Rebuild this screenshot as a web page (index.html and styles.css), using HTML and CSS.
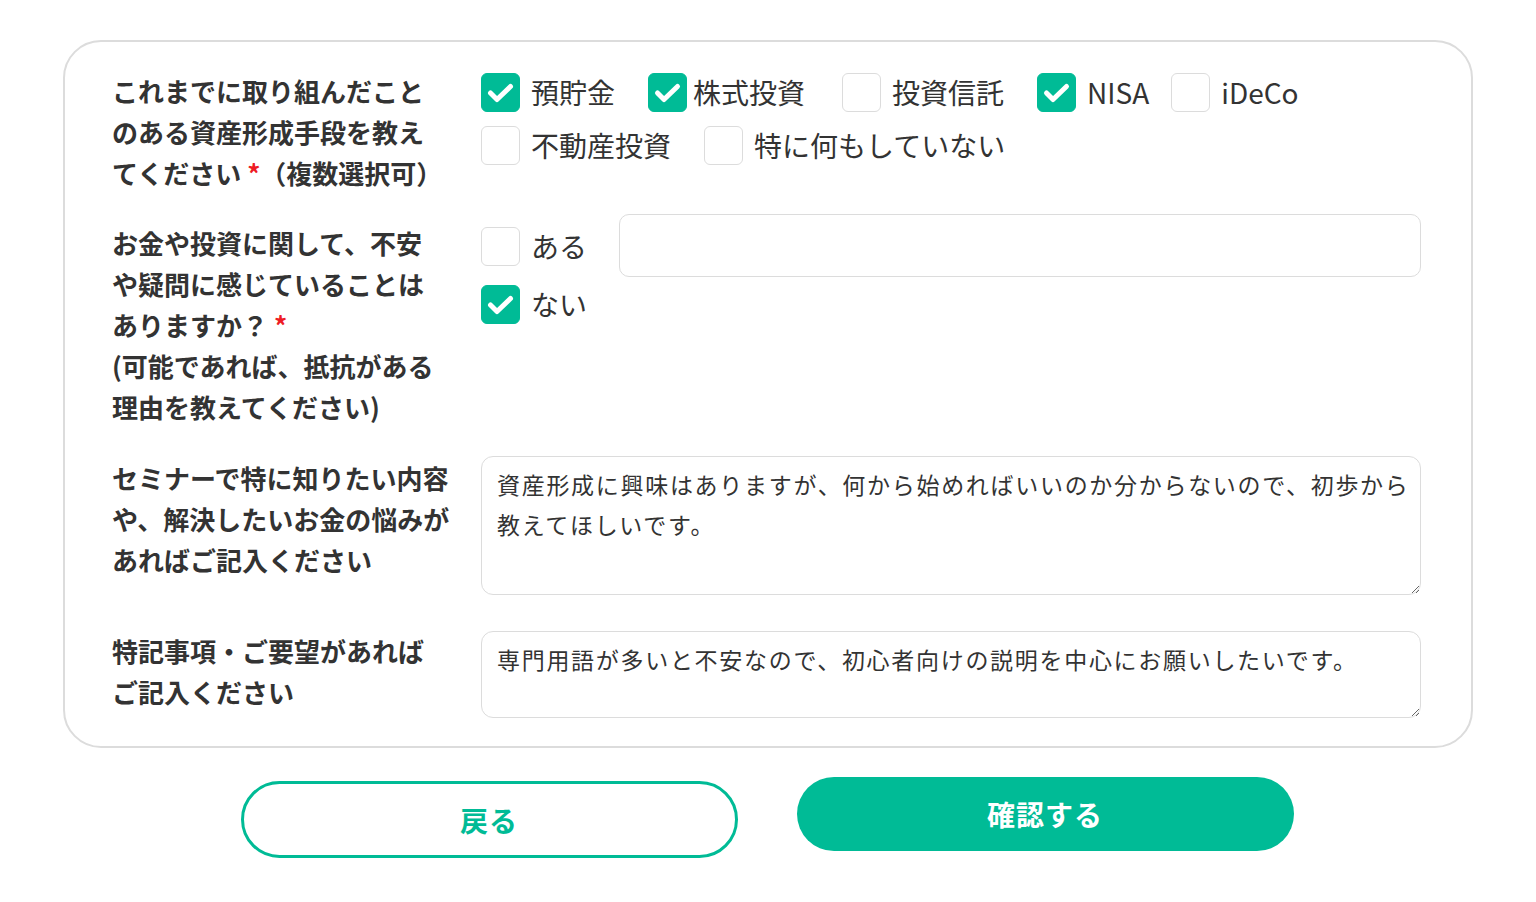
FILE: index.html
```html
<!DOCTYPE html>
<html lang="ja">
<head>
<meta charset="utf-8">
<title>フォーム</title>
<link rel="stylesheet" href="styles.css">
</head>
<body>
<div class="page">
  <form class="card">
    <div class="row row-1">
      <div class="label">これまでに取り組んだこと<br>のある資産形成手段を教え<br>てください <span class="req">*</span>（複数選択可）</div>
      <div class="options">
        <label class="opt"><span class="cb on"><svg viewBox="0 0 39 39"><polyline points="9.5,20 16,26.5 29.5,13.5"/></svg></span><span class="opt-text">預貯金</span></label>
        <label class="opt opt-kabu"><span class="cb on"><svg viewBox="0 0 39 39"><polyline points="9.5,20 16,26.5 29.5,13.5"/></svg></span><span class="opt-text t-kabu">株式投資</span></label>
        <label class="opt"><span class="cb"></span><span class="opt-text">投資信託</span></label>
        <label class="opt opt-nisa"><span class="cb on"><svg viewBox="0 0 39 39"><polyline points="9.5,20 16,26.5 29.5,13.5"/></svg></span><span class="opt-text">NISA</span></label>
        <label class="opt"><span class="cb"></span><span class="opt-text">iDeCo</span></label>
        <label class="opt"><span class="cb"></span><span class="opt-text">不動産投資</span></label>
        <label class="opt"><span class="cb"></span><span class="opt-text">特に何もしていない</span></label>
      </div>
    </div>

    <div class="row row-2">
      <div class="label label-2">お金や投資に関して、不安<br>や疑問に感じていることは<br>ありますか？ <span class="req">*</span><br>(可能であれば、抵抗がある<br>理由を教えてください)</div>
      <div class="yesno">
        <div class="stack">
          <label class="opt"><span class="cb"></span><span class="opt-text">ある</span></label>
          <label class="opt"><span class="cb on"><svg viewBox="0 0 39 39"><polyline points="9.5,20 16,26.5 29.5,13.5"/></svg></span><span class="opt-text">ない</span></label>
        </div>
        <input class="field" type="text" value="">
      </div>
    </div>

    <div class="row row-3">
      <div class="label">セミナーで特に知りたい内容<br>や、解決したいお金の悩みが<br>あればご記入ください</div>
      <textarea class="area area-tall">資産形成に興味はありますが、何から始めればいいのか分からないので、初歩から
教えてほしいです。</textarea>
    </div>

    <div class="row row-4">
      <div class="label">特記事項・ご要望があれば<br>ご記入ください</div>
      <textarea class="area area-short">専門用語が多いと不安なので、初心者向けの説明を中心にお願いしたいです。</textarea>
    </div>
  </form>

  <div class="actions">
    <button class="btn btn-back" type="button">戻る</button>
    <button class="btn btn-confirm" type="button">確認する</button>
  </div>
</div>
</body>
</html>
```

FILE: styles.css
```css
* { box-sizing: border-box; }

html, body {
  margin: 0;
  padding: 0;
  background: #ffffff;
}

body {
  font-family: "Noto Sans CJK JP", "Noto Sans", sans-serif;
  color: #333333;
}

.page {
  padding: 40px 63px 0 63px;
}

.card {
  width: 1410px;
  border: 2px solid #dcdcdc;
  border-radius: 38px;
  padding: 28px 50px 28px 47px;
}

.row {
  display: grid;
  grid-template-columns: 369px 1fr;
  align-items: start;
}

.row-1 { margin-bottom: 21px; }
.row-2 { margin-bottom: 29px; }
.row-3 { margin-bottom: 36px; }

.label {
  font-size: 26px;
  font-weight: 700;
  line-height: 41px;
  color: #333333;
  white-space: nowrap;
}

.row-3 .label { margin-top: 1px; }
.row-4 .label { margin-top: -1px; }

.label-2 { margin-top: 8px; }

.req {
  color: #ee1c25;
}

/* options */
.options {
  display: flex;
  flex-wrap: wrap;
  row-gap: 13px;
  padding-top: 2px;
}

.opt {
  display: flex;
  align-items: center;
  height: 40px;
  margin-right: 33px;
}

.opt-kabu { margin-right: 37px; }
.opt-nisa { margin-right: 22px; }

.opt-text {
  font-size: 28px;
  line-height: 40px;
  color: #333333;
  margin-left: 11px;
  white-space: nowrap;
}

.t-kabu { margin-left: 6px; }

.cb {
  width: 39px;
  height: 39px;
  flex: none;
  border: 1px solid #dcdcdc;
  border-radius: 6px;
  background: #ffffff;
  display: flex;
  align-items: center;
  justify-content: center;
}

.cb.on {
  background: #00bb96;
  border-color: #00bb96;
}

.cb svg {
  width: 39px;
  height: 39px;
  display: block;
  flex: none;
}

.cb svg polyline {
  fill: none;
  stroke: #ffffff;
  stroke-width: 5;
  stroke-linecap: round;
  stroke-linejoin: round;
}

/* yes / no + text field */
.yesno {
  display: flex;
  align-items: flex-start;
}

.stack {
  display: flex;
  flex-direction: column;
  gap: 18px;
  padding-top: 12px;
  width: 138px;
  flex: none;
}

.stack .opt { margin-right: 0; }

.field {
  flex: 1;
  height: 63px;
  border: 1px solid #dcdcdc;
  border-radius: 10px;
  font-family: inherit;
  font-size: 23px;
  padding: 0 15px;
  outline: none;
}

/* textareas */
.area {
  display: block;
  width: 100%;
  border: 1px solid #dcdcdc;
  border-radius: 12px;
  font-family: "Noto Sans CJK JP", sans-serif;
  font-size: 23px;
  letter-spacing: 1.7px;
  line-height: 40px;
  color: #333333;
  padding: 7px 3px 7px 15px;
  outline: none;
  overflow: hidden;
  resize: vertical;
}

.area-tall { height: 139px; }
.area-short { height: 87px; }

/* buttons */
.actions {
  display: flex;
  justify-content: center;
  align-items: flex-start;
  gap: 59px;
  margin-top: 29px;
  padding-right: 2px;
}

.btn {
  width: 497px;
  border-radius: 40px;
  font-family: "Noto Sans CJK JP", sans-serif;
  font-size: 28px;
  font-weight: 700;
  letter-spacing: 1px;
  cursor: pointer;
}

.btn-back {
  height: 77px;
  margin-top: 4px;
  background: #ffffff;
  border: 3px solid #00bb96;
  color: #00bb96;
}

.btn-confirm {
  height: 74px;
  background: #00bb96;
  border: none;
  color: #ffffff;
}
```
